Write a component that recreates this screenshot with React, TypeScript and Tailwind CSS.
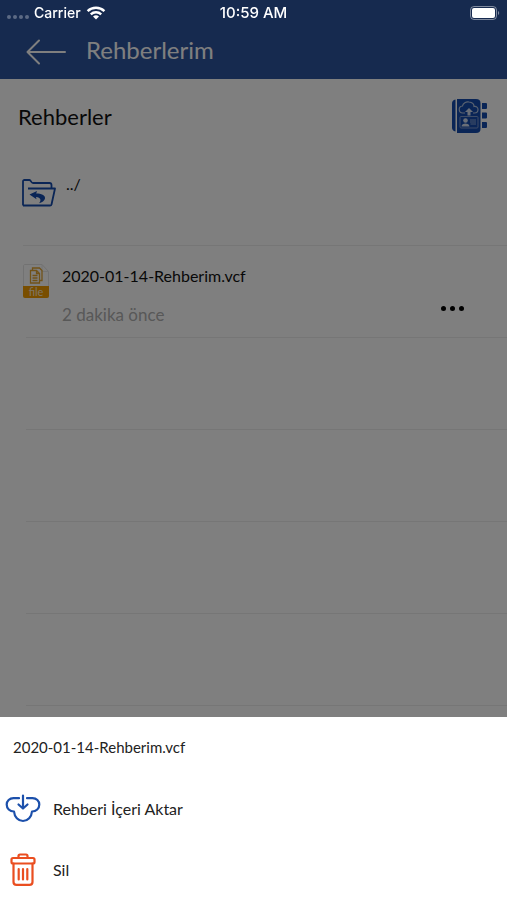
import React, { useState } from 'react';

interface ContactFile {
    name: string;
    age: string;
}

const FILES: ContactFile[] = [{ name: '2020-01-14-Rehberim.vcf', age: '2 dakika önce' }];

const EMPTY_ROWS = [0, 1, 2, 3, 4];

const WifiIcon = () => (
    <svg width="20" height="14" viewBox="0 0 20 14" fill="none" stroke="#fff" strokeWidth="2.4" aria-hidden="true">
        <path d="M1.6 5.2a12 12 0 0 1 16.8 0" />
        <path d="M4.8 8.4a7.4 7.4 0 0 1 10.4 0" />
        <path d="M10 13.6 7 10.6a4.3 4.3 0 0 1 6 0Z" fill="#fff" stroke="none" />
    </svg>
);

const BatteryIcon = () => (
    <svg width="30" height="14" viewBox="0 0 30 14" fill="none" aria-hidden="true">
        <rect x="0.5" y="0.5" width="26" height="13" rx="3.5" stroke="#fff" strokeOpacity="0.45" />
        <rect x="2" y="2" width="23" height="10" rx="2" fill="#fff" />
        <path d="M28 5v4c1.600-.6 1.600-3.400 0-4Z" fill="#fff" fillOpacity="0.45" />
    </svg>
);

const BackIcon = () => (
    <svg width="40" height="26" viewBox="0 0 40 26" fill="none" stroke="#fff" strokeWidth="2" strokeLinecap="round" strokeLinejoin="round" aria-hidden="true">
        <path d="M13 1.500 1.500 13 13 24.500M1.500 13H39" />
    </svg>
);

const ContactsBackupIcon = () => (
    <svg width="38" height="36" viewBox="0 0 38 36" fill="none" aria-hidden="true">
        <path d="M4.500 1.500v32C2 33 1 31.500 1 29.500v-24c0-2 1-3.500 3.500-4Z" fill="#144bac" />
        <path d="M6 1h19c3 0 4.500 1.500 4.500 4v26c0 2.500-1.500 4-4.500 4H6Z" fill="#144bac" />
        <path d="M31 5h4a1 1 0 0 1 1 1v4a1 1 0 0 1-1 1h-4ZM31 14.500h4a1 1 0 0 1 1 1v4a1 1 0 0 1-1 1h-4ZM31 24h4a1 1 0 0 1 1 1v4a1 1 0 0 1-1 1h-4Z" fill="#144bac" />
        <path d="M14 15h-2a3.500 3.500 0 0 1-.5-7C12 5 15 3.500 18 4c3 .3 5 2 5 4.500 2.500-.4 4 1 4 3s-1.500 3.500-3.500 3.500H22" stroke="#b4c4e0" strokeWidth="1.200" />
        <path d="m18 10 4 4h-2.500v3.500h-3V14H14Z" fill="#d5dff0" />
        <rect x="9" y="18.500" width="18" height="11.500" rx="1" stroke="#7d98cc" strokeWidth="1" />
        <circle cx="14.500" cy="22.500" r="2.300" fill="#d5dff0" />
        <path d="M10.500 28.500c.3-2.500 2-2.500 4-3 2 .5 3.700.5 4 3Z" fill="#d5dff0" />
        <path d="M19 22h6M19 24h6M19.500 26h5.500" stroke="#8ea6d4" strokeWidth="1.200" />
    </svg>
);

const FolderUpIcon = () => (
    <svg width="34" height="28" viewBox="0 0 34 28" fill="none" aria-hidden="true">
        <path d="M1 26.500V2.500C1 1.500 1.500 1 2.500 1h5C9 1 9 4 11 4h16.500C29 4 29.500 5 29.500 6v3M6 9.500h27l-3.500 16c-.2.800-.7 1-1.500 1H1" stroke="#144bac" strokeWidth="1.800" strokeLinejoin="round" />
        <path d="m7.500 15.500 7.500-3.500-.8 2.500c5 0 9.300 1.500 8.800 5-.3 2.200-3 4-6 4.700 2.500-2.500 2-5.700-3-6.200l.5 2.200Z" fill="#144bac" />
    </svg>
);

const FileIcon = () => (
    <svg width="26" height="34" viewBox="0 0 26 34" fill="none" aria-hidden="true">
        <path d="M.5 33V2C.5 1 1 .5 2 .5h17l6.500 7V33Z" fill="#fff" stroke="#e4e4e4" />
        <path d="M19 .5v7h6.500" stroke="#e8e8e8" />
        <path d="M0 22h26v10a2 2 0 0 1-2 2H2a2 2 0 0 1-2-2Z" fill="#f29d00" />
        <path d="M9.500 6V4h7l2.500 2.500V16.500h-2.500M7.500 6.500h6l3 3V19h-9ZM13.500 6.500v3h3M9.500 11.500h5M9.500 14h5M9.500 16.500h5" stroke="#e2a430" strokeWidth="1.300" />
        <text x="13" y="31.500" textAnchor="middle" fontSize="11" fontFamily="Lato, sans-serif" fill="#fff" fillOpacity="0.8">file</text>
    </svg>
);

const CloudDownIcon = () => (
    <svg width="36" height="30" viewBox="0 0 36 30" fill="none" stroke="#1c50ab" strokeWidth="2.200" strokeLinecap="round" strokeLinejoin="round" aria-hidden="true">
        <path d="M14 4.200H8.500C4.500 4.200 1.700 7 1.700 10.500c0 4 3 7 7.300 7 .5 5.500 4 9.500 9 9.500s8.500-4 9-9.500c4.300 0 7.300-3 7.300-7 0-3.500-2.800-6.300-6.800-6.300H22" />
        <path d="M18 1.500V14M13.500 10.500 18 14.500l4.500-4" />
    </svg>
);

const TrashIcon = () => (
    <svg width="26" height="33" viewBox="0 0 26 33" fill="none" stroke="#ea4e20" strokeWidth="2.200" strokeLinejoin="round" strokeLinecap="round" aria-hidden="true">
        <path d="M8.500 5V3c0-1 .5-1.500 1.500-1.500h6c1 0 1.500.5 1.500 1.500v2" />
        <rect x="1.500" y="5" width="23" height="5.500" rx="1.500" />
        <path d="M3.500 10.500V29c0 2 1 2.800 3 2.800h13c2 0 3-.8 3-2.800V10.500M8.700 16v10.500M13 16v10.500M17.300 16v10.500" />
    </svg>
);

const StatusBar = () => (
    <div className="fixed inset-x-0 top-0 z-20 grid h-[26px] grid-cols-3 items-center px-[7px] font-[Inter,sans-serif] text-sm font-medium text-white">
        <div className="flex items-center gap-[5px]">
            <div className="flex gap-[2px] pt-2">
                {[0, 1, 2, 3].map(dot => (
                    <span key={dot} className="size-[4px] rounded-full bg-white/30" />
                ))}
            </div>
            <span>Carrier</span>
            <WifiIcon />
        </div>
        <span className="text-center text-[15px]">10:59 AM</span>
        <div className="flex justify-end">
            <BatteryIcon />
        </div>
    </div>
);

const ActionSheet: React.FC<{ file: ContactFile; onClose: () => void }> = ({ file, onClose }) => (
    <section role="dialog" aria-label={file.name} className="fixed inset-x-0 bottom-0 z-20 bg-white text-[#222]">
        <h2 className="flex h-[61px] items-center px-[13px] text-[15px]">{file.name}</h2>
        <button onClick={onClose} className="flex h-[61px] w-full items-center text-left text-base">
            <span className="flex w-[46px] justify-center"><CloudDownIcon /></span>
            <span className="pl-[7px]">Rehberi İçeri Aktar</span>
        </button>
        <button onClick={onClose} className="flex h-[61px] w-full items-center text-left text-base">
            <span className="flex w-[46px] justify-center"><TrashIcon /></span>
            <span className="pl-[7px]">Sil</span>
        </button>
    </section>
);

const App: React.FC = () => {
    const [selectedFile, setSelectedFile] = useState<ContactFile | null>(FILES[0]);

    return (
        <div className="h-screen overflow-hidden bg-white font-[Lato,sans-serif] text-[#111]">
            <StatusBar />
            <header className="flex h-[79px] items-center gap-5 bg-[#2c549f] px-[26px] pt-[24px] text-white">
                <button aria-label="Geri"><BackIcon /></button>
                <h1 className="pb-1 text-2xl">Rehberlerim</h1>
            </header>

            <main>
                <div className="flex h-[74px] items-center justify-between px-[18px]">
                    <h2 className="text-[22px]">Rehberler</h2>
                    <button aria-label="Yedekle"><ContactsBackupIcon /></button>
                </div>

                <ul>
                    <li className="ml-[22px] h-[92px]">
                        <button className="flex w-full gap-[10px] pt-[22px] text-left">
                            <span className="pt-1"><FolderUpIcon /></span>
                            <span className="text-base leading-[18px]">../</span>
                        </button>
                    </li>
                    {FILES.map(file => (
                        <li key={file.name} className="ml-[23px] flex h-[92px] items-start border-t border-[#ececec] pt-[18px]">
                            <FileIcon />
                            <div className="flex flex-1 flex-col gap-[15px] pl-[13px] leading-6">
                                <span className="text-base leading-6">{file.name}</span>
                                <span className="text-[17px] leading-6 text-[#b0b0b0]">{file.age}</span>
                            </div>
                            <button aria-label="Seçenekler" onClick={() => setSelectedFile(file)} className="mt-[42px] mr-[43px] flex gap-[4px]">
                                <span className="size-[5px] rounded-full bg-black" />
                                <span className="size-[5px] rounded-full bg-black" />
                                <span className="size-[5px] rounded-full bg-black" />
                            </button>
                        </li>
                    ))}
                    {EMPTY_ROWS.map(row => (
                        <li key={row} className="ml-[26px] h-[92px] border-t border-[#ececec]" />
                    ))}
                </ul>
            </main>

            {selectedFile && (
                <>
                    <div className="fixed inset-0 z-10 bg-black/50" onClick={() => setSelectedFile(null)} />
                    <ActionSheet file={selectedFile} onClose={() => setSelectedFile(null)} />
                </>
            )}
        </div>
    );
};

export default App;
